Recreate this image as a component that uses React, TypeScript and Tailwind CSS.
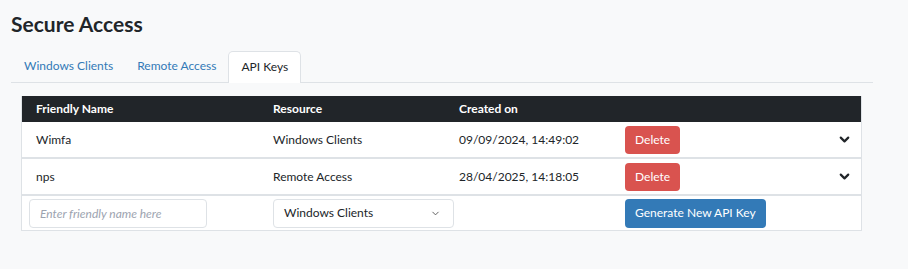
import { ChevronDown } from "lucide-react";

const rows = [
  { name: "Wimfa", resource: "Windows Clients", created: "09/09/2024, 14:49:02" },
  { name: "nps", resource: "Remote Access", created: "28/04/2025, 14:18:05" },
];

const cols = "grid grid-cols-[237px_186px_166px_1fr_40px] items-center";

export default function App() {
  return (
    <div className="min-h-[269px] bg-[#f8f9fa] font-['Lato',sans-serif] text-[12px] leading-[18px] text-[#212529]">
      <div className="pl-[11px] pr-[35px] pt-[10px]">
        <h1 className="text-[21px] font-bold leading-[28px]">Secure Access</h1>

        <div className="mt-[13px] flex border-b border-[#dee2e6] pl-[1px]">
          <button className="px-[12px] pb-[7px] pt-[6px] text-[#337ab7]">Windows Clients</button>
          <button className="px-[12px] pb-[7px] pt-[6px] text-[#337ab7]">Remote Access</button>
          <button className="-mb-px rounded-t-[5px] border border-b-0 border-[#dee2e6] bg-white px-[12px] pb-[7px] pt-[5px] text-[#212529]">
            API Keys
          </button>
        </div>

        <div className="ml-[10px] mr-[11px] mt-[13px] border-x border-b border-[#dee2e6] bg-white">
          <div className={`${cols} h-[26px] bg-[#212529] font-bold text-white`}>
            <div className="pl-[14px]">Friendly Name</div>
            <div className="pl-[14px]">Resource</div>
            <div className="pl-[14px]">Created on</div>
            <div />
            <div />
          </div>

          {rows.map((r) => (
            <div key={r.name} className={`${cols} h-[37px] border-b-2 border-[#dee2e6]`}>
              <div className="pl-[14px]">{r.name}</div>
              <div className="pl-[14px]">{r.resource}</div>
              <div className="pl-[14px]">{r.created}</div>
              <div className="pl-[14px]">
                <button className="h-[28px] rounded-[4px] bg-[#d9534f] px-[10px] text-white">Delete</button>
              </div>
              <div className="flex justify-end pr-[9px]">
                <ChevronDown size={15} strokeWidth={3.5} />
              </div>
            </div>
          ))}

          <div className={`${cols} h-[34px]`}>
            <div className="pl-[7px]">
              <input
                placeholder="Enter friendly name here"
                className="h-[29px] w-[178px] rounded-[4px] border border-[#dee2e6] px-[10px] italic placeholder:text-[#9ca3af] outline-none"
              />
            </div>
            <div className="pl-[14px]">
              <div className="flex h-[29px] w-[181px] items-center justify-between rounded-[4px] border border-[#dee2e6] pl-[10px] pr-[12px]">
                <span>Windows Clients</span>
                <ChevronDown size={11} strokeWidth={2} className="text-[#555]" />
              </div>
            </div>
            <div />
            <div className="pl-[14px]">
              <button className="h-[29px] whitespace-nowrap rounded-[4px] bg-[#337ab7] px-[10px] text-white">
                Generate New API Key
              </button>
            </div>
            <div />
          </div>
        </div>
      </div>
    </div>
  );
}
